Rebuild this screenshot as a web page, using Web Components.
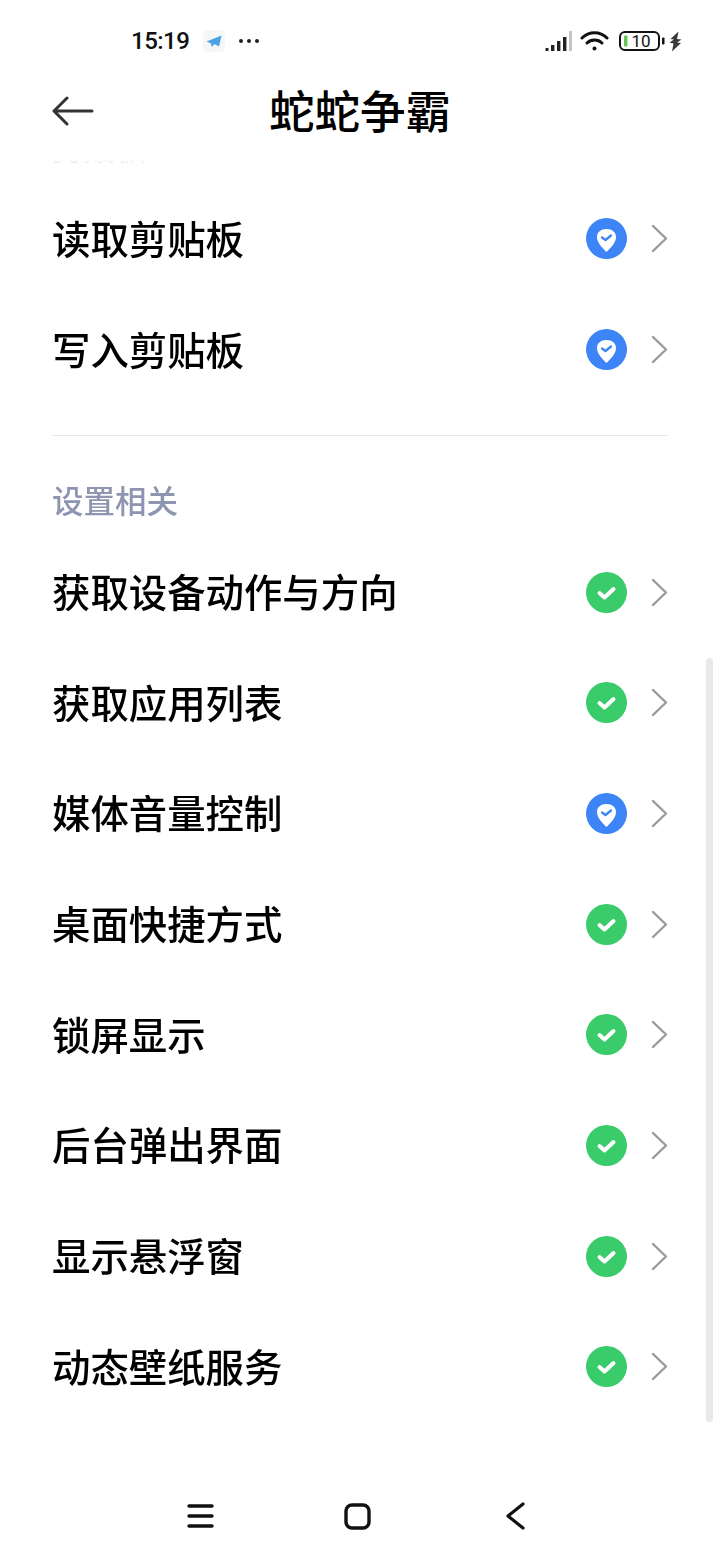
<!DOCTYPE html>
<html lang="zh">
<head>
<meta charset="utf-8">
<title>蛇蛇争霸</title>
<style>
    html, body { margin: 0; background: #fff; }
</style>
</head>
<body>
<app-screen>
    <status-bar slot="status"></status-bar>
    <title-bar slot="title">蛇蛇争霸</title-bar>
    <section-label>剪贴板</section-label>
    <perm-row kind="ask">读取剪贴板</perm-row>
    <perm-row kind="ask">写入剪贴板</perm-row>
    <section-rule></section-rule>
    <section-label>设置相关</section-label>
    <perm-row kind="ok">获取设备动作与方向</perm-row>
    <perm-row kind="ok">获取应用列表</perm-row>
    <perm-row kind="ask">媒体音量控制</perm-row>
    <perm-row kind="ok">桌面快捷方式</perm-row>
    <perm-row kind="ok">锁屏显示</perm-row>
    <perm-row kind="ok">后台弹出界面</perm-row>
    <perm-row kind="ok">显示悬浮窗</perm-row>
    <perm-row kind="ok">动态壁纸服务</perm-row>
    <nav-bar slot="nav"></nav-bar>
</app-screen>

<script>
const CJK = `"Noto Sans CJK SC", "Noto Sans", sans-serif`;

class AppScreen extends HTMLElement {
    constructor() {
        super();
        this.attachShadow({ mode: 'open' });
    }

    connectedCallback() {
        this.shadowRoot.innerHTML = /*html*/`
        <style>
            :host {
                display: flex;
                flex-direction: column;
                width: 720px;
                height: 1560px;
                overflow: hidden;
                background: #fff;
            }
            .list {
                position: relative;
                flex: 1;
                min-height: 0;
                overflow: hidden;
                -webkit-mask-image: linear-gradient(transparent 0, #000 14px);
                mask-image: linear-gradient(transparent 0, #000 14px);
            }
            .inner {
                margin-top: -46px;
            }
            .thumb {
                position: absolute;
                top: 498px;
                right: 7px;
                width: 7px;
                height: 764px;
                border-radius: 4px;
                background: #e9e9e9;
            }
        </style>
        <slot name="status"></slot>
        <slot name="title"></slot>
        <div class="list">
            <div class="inner"><slot></slot></div>
            <div class="thumb"></div>
        </div>
        <slot name="nav"></slot>
        `;
    }
}

class StatusBar extends HTMLElement {
    constructor() {
        super();
        this.attachShadow({ mode: 'open' });
    }

    connectedCallback() {
        this.shadowRoot.innerHTML = /*html*/`
        <style>
            :host {
                display: flex;
                align-items: center;
                height: 82px;
                padding: 0 38px 0 131px;
                box-sizing: border-box;
                color: #111;
            }
            .time {
                font: 500 24px Roboto, sans-serif;
                letter-spacing: -0.5px;
            }
            .tile {
                margin-left: 14px;
                width: 22px;
                height: 22px;
                border-radius: 5px;
                background: #f5f6f7;
            }
            .dots { margin-left: 13px; }
            .right {
                margin-left: auto;
                display: flex;
                align-items: center;
            }
            svg { display: block; }
            .batt {
                position: relative;
                width: 46px;
                height: 20px;
                margin-left: 10px;
            }
            .batt span {
                position: absolute;
                left: 10px;
                top: 0;
                width: 24px;
                text-align: center;
                font: 400 17px/20px Roboto, sans-serif;
            }
        </style>
        <span class="time">15:19</span>
        <svg class="tile" viewBox="0 0 22 22">
            <path d="M3.5 11.5 L18.5 5.5 L16 16.5 L11.5 14 L8.8 17 L8 13.5 Z" fill="#4ba3e3"/>
        </svg>
        <svg class="dots" width="22" height="6" viewBox="0 0 22 6" fill="#222">
            <circle cx="3" cy="3" r="2"/><circle cx="11" cy="3" r="2"/><circle cx="19" cy="3" r="2"/>
        </svg>
        <div class="right">
            <svg width="28" height="22" viewBox="0 0 28 22">
                <rect x="0.5" y="18" width="3" height="3" fill="#222"/>
                <rect x="6" y="15" width="3.4" height="6" fill="#222"/>
                <rect x="12" y="11" width="3.4" height="10" fill="#222"/>
                <rect x="18" y="7" width="3.4" height="14" fill="#222"/>
                <rect x="24" y="1" width="3" height="20" fill="#c4c4c4"/>
            </svg>
            <svg style="margin-left:7px" width="29" height="22" viewBox="0 0 29 22" fill="none" stroke="#111" stroke-width="3" stroke-linecap="round">
                <path d="M2 8 C9 1 20 1 27 8"/>
                <path d="M7 13 C11 9 18 9 22 13"/>
                <circle cx="14.5" cy="18.5" r="2" fill="#111" stroke="none"/>
            </svg>
            <div class="batt">
                <svg width="46" height="20" viewBox="0 0 46 20">
                    <rect x="1" y="1" width="39" height="18" rx="5" fill="none" stroke="#111" stroke-width="2"/>
                    <rect x="5" y="4.5" width="3.5" height="11" rx="1" fill="#62c554"/>
                    <rect x="43" y="6.5" width="2.5" height="7" rx="1" fill="#111"/>
                </svg>
                <span>10</span>
            </div>
            <svg style="margin-left:4px" width="13" height="21" viewBox="0 0 13 21">
                <path d="M9.5 0.5 L1.5 8 L5 8.5 L0.5 11.5 L4.5 12.5 L3 20.5 L12 12 L8 11.5 L12.5 8.5 L8 8 Z" fill="#3a3a3a"/>
            </svg>
        </div>
        `;
    }
}

class TitleBar extends HTMLElement {
    constructor() {
        super();
        this.attachShadow({ mode: 'open' });
    }

    connectedCallback() {
        this.shadowRoot.innerHTML = /*html*/`
        <style>
            :host {
                display: grid;
                grid-template-columns: 1fr auto 1fr;
                align-items: center;
                height: 58px;
                margin-bottom: 20px;
                padding: 0 52px;
            }
            .title {
                font: 500 45.5px/58px ${CJK};
                color: #000;
                position: relative;
                top: -2px;
            }
            svg { display: block; }
        </style>
        <svg width="42" height="30" viewBox="0 0 42 30" fill="none" stroke="#333" stroke-width="3" stroke-linecap="round" stroke-linejoin="round">
            <path d="M15 2 L2 15 L15 28 M2 15 H40"/>
        </svg>
        <div class="title"><slot></slot></div>
        `;
    }
}

class SectionLabel extends HTMLElement {
    constructor() {
        super();
        this.attachShadow({ mode: 'open' });
    }

    connectedCallback() {
        this.shadowRoot.innerHTML = /*html*/`
        <style>
            :host {
                display: flex;
                align-items: center;
                height: 70.65px;
                padding: 0 52px;
                font: 500 31.5px ${CJK};
                color: #8e95b0;
            }
            span { position: relative; top: -3px; }
        </style>
        <span><slot></slot></span>
        `;
    }
}

class SectionRule extends HTMLElement {
    constructor() {
        super();
        this.attachShadow({ mode: 'open' });
    }

    connectedCallback() {
        this.shadowRoot.innerHTML = /*html*/`
        <style>
            :host {
                display: block;
                height: 1px;
                margin: 29px 52px 31px;
                background: #e6e6e6;
            }
        </style>
        `;
    }
}

class PermRow extends HTMLElement {
    constructor() {
        super();
        this.attachShadow({ mode: 'open' });
    }

    connectedCallback() {
        const ask = this.getAttribute('kind') === 'ask';
        const badge = ask
            ? `<circle cx="20.5" cy="20.5" r="20.5" fill="#3d85f6"/>
               <path d="M20.5 11 C26 11 30 14 30 19 C30 25 24.5 30 20.5 34 C16.5 30 11 25 11 19 C11 14 15 11 20.5 11 Z" fill="#fff"/>
               <path d="M16 19.5 L19.5 22 L25 17.5" fill="none" stroke="#3d85f6" stroke-width="2.3" stroke-linecap="round" stroke-linejoin="round"/>`
            : `<circle cx="20.5" cy="20.5" r="20.5" fill="#3acb6a"/>
               <path d="M13.5 21 L18.5 25.5 L27.5 17" fill="none" stroke="#fff" stroke-width="4" stroke-linecap="round" stroke-linejoin="round"/>`;

        this.shadowRoot.innerHTML = /*html*/`
        <style>
            :host {
                display: flex;
                align-items: center;
                height: 110.7px;
                padding: 0 52px;
                font: 500 38.4px ${CJK};
                color: #000;
            }
            .label { flex: 1; position: relative; top: -3px; }
            svg { display: block; position: relative; top: -1px; }
            .chevron { margin-left: 24px; }
        </style>
        <span class="label"><slot></slot></span>
        <svg width="41" height="41" viewBox="0 0 41 41">${badge}</svg>
        <svg class="chevron" width="17" height="29" viewBox="0 0 17 29" fill="none" stroke="#9a9a9a" stroke-width="2.4" stroke-linecap="round" stroke-linejoin="round">
            <path d="M2 2 L15 14.5 L2 27"/>
        </svg>
        `;
    }
}

class NavBar extends HTMLElement {
    constructor() {
        super();
        this.attachShadow({ mode: 'open' });
    }

    connectedCallback() {
        this.shadowRoot.innerHTML = /*html*/`
        <style>
            :host {
                display: flex;
                align-items: center;
                height: 88px;
                padding-left: 187px;
            }
            svg { display: block; }
            .home { margin-left: 130px; }
            .back { margin-left: 135px; }
        </style>
        <svg width="27" height="26" viewBox="0 0 27 26" fill="none" stroke="#111" stroke-width="3.4" stroke-linecap="round">
            <path d="M2 3 H25 M2 13 H25 M2 23 H25"/>
        </svg>
        <svg class="home" width="27" height="27" viewBox="0 0 27 27" fill="none" stroke="#111" stroke-width="3.4">
            <rect x="2" y="2" width="23" height="23" rx="6"/>
        </svg>
        <svg class="back" width="19" height="28" viewBox="0 0 19 28" fill="none" stroke="#111" stroke-width="3.2" stroke-linecap="round" stroke-linejoin="round">
            <path d="M17 2 L2 14 L17 26"/>
        </svg>
        `;
    }
}

customElements.define('app-screen', AppScreen);
customElements.define('status-bar', StatusBar);
customElements.define('title-bar', TitleBar);
customElements.define('section-label', SectionLabel);
customElements.define('section-rule', SectionRule);
customElements.define('perm-row', PermRow);
customElements.define('nav-bar', NavBar);
</script>
</body>
</html>
